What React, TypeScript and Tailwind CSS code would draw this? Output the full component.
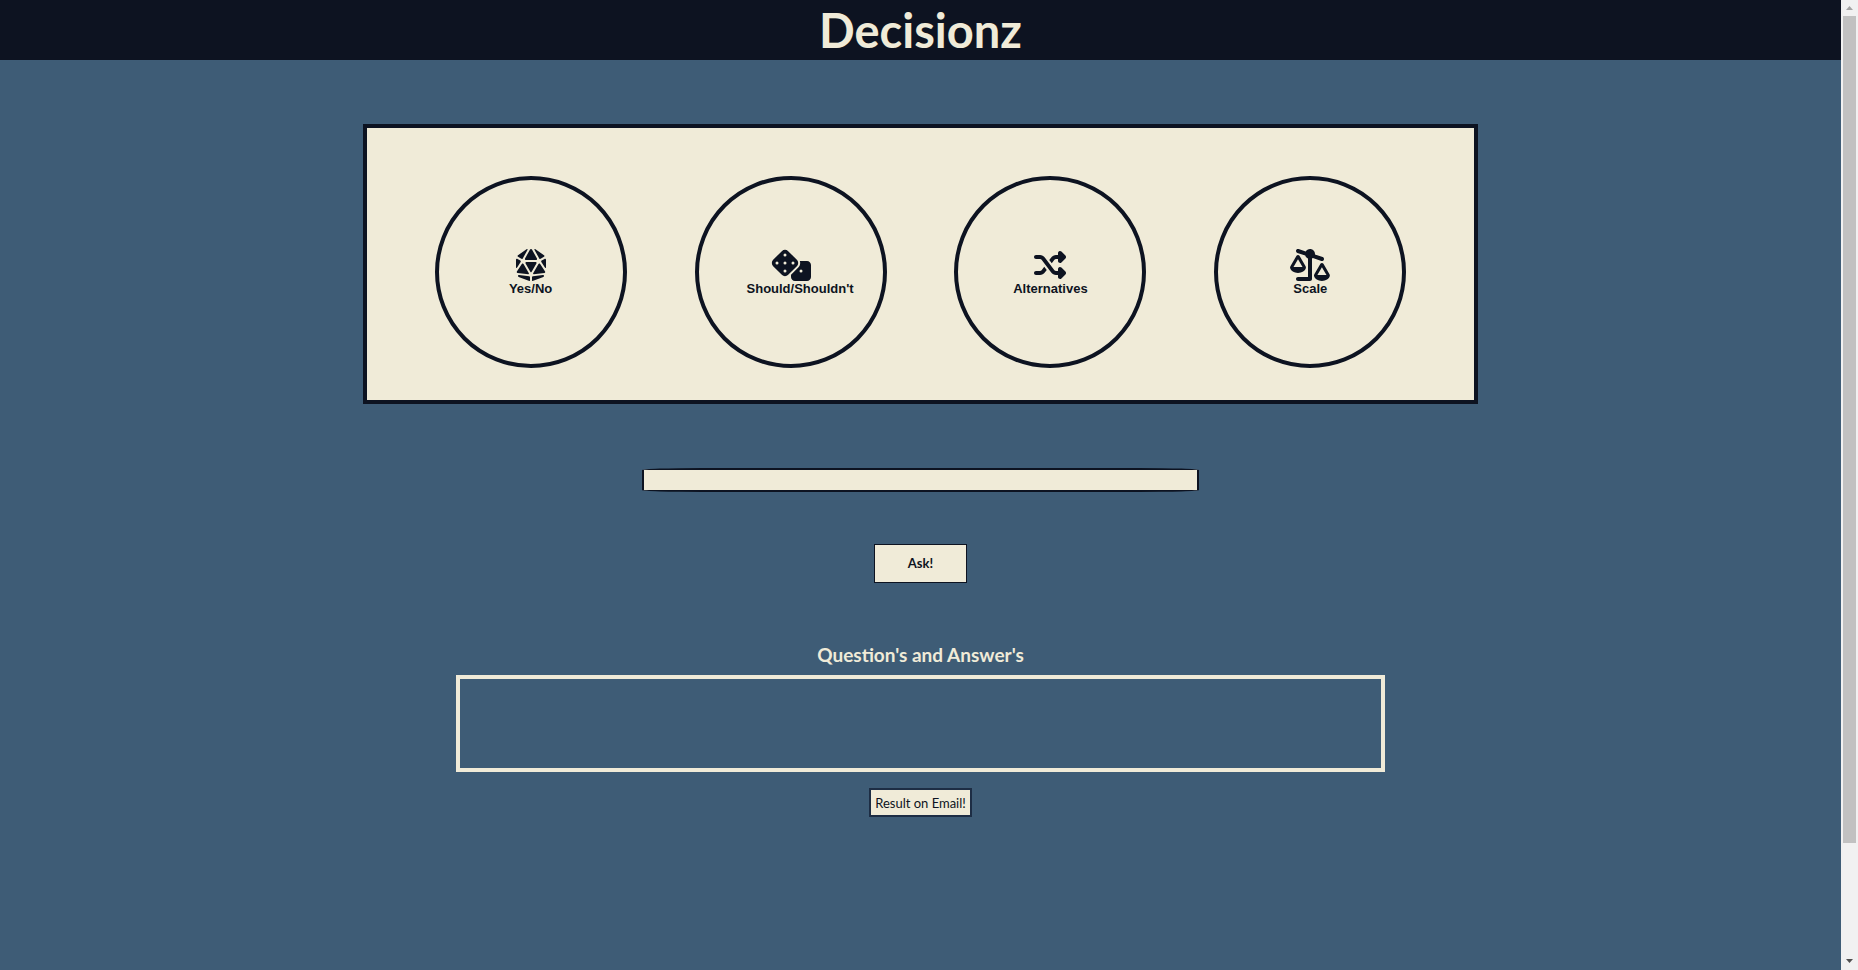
import { useState } from "react";
import type { FormEvent } from "react";
import type { IconType } from "react-icons";
import { FaDiceD20, FaDice, FaShuffle, FaScaleUnbalancedFlip } from "react-icons/fa6";

const modes: { label: string; Icon: IconType; width: string }[] = [
  { label: "Yes/No", Icon: FaDiceD20, width: "w-8" },
  { label: "Should/Shouldn't", Icon: FaDice, width: "w-10" },
  { label: "Alternatives", Icon: FaShuffle, width: "w-8" },
  { label: "Scale", Icon: FaScaleUnbalancedFlip, width: "w-10" },
];

function ModeButton({ label, Icon, width }: { label: string; Icon: IconType; width: string }) {
  return (
    <button
      type="button"
      className="size-48 shrink-0 rounded-full border-4 border-[#0d1321] px-12 pt-0.5 text-center font-['Liberation_Sans',sans-serif] text-[13px] leading-4 font-bold whitespace-nowrap text-[#0d1321]"
    >
      <Icon className={`mx-auto h-8 ${width}`} aria-hidden="true" />
      {label}
    </button>
  );
}

function ScrollTrack() {
  return (
    <div aria-hidden="true" className="sticky top-0 flex h-screen w-[17px] shrink-0 flex-col items-center bg-[#f1f1f1]">
      <svg className="h-4 w-[17px] shrink-0" viewBox="0 0 17 16" fill="#a3a3a3">
        <path d="M5 10h7L8.500 6z" />
      </svg>
      <div className="h-[85.300%] w-[13px] bg-[#c1c1c1]" />
      <svg className="mt-auto h-4 w-[17px] shrink-0" viewBox="0 0 17 16" fill="#505050">
        <path d="M5 5h7L8.500 9z" />
      </svg>
    </div>
  );
}

export default function App() {
  const [question, setQuestion] = useState("");
  const submit = (e: FormEvent) => e.preventDefault();

  return (
    <div className="flex min-h-screen bg-[#3e5c76] font-['Lato',sans-serif] text-[#0d1321]">
      <div className="flex min-w-0 flex-1 flex-col items-center">
        <header className="flex h-15 w-full justify-center bg-[#0d1321]">
          <h1 className="text-[47px] leading-15 font-bold text-[#f0ebd8]">Decisionz</h1>
        </header>

        <main className="flex w-full flex-col items-center pt-16">
          <section
            aria-label="Decision type"
            className="flex w-[60.6%] flex-wrap justify-evenly border-4 border-[#0d1321] bg-[#f0ebd8] pt-12 pb-8"
          >
            {modes.map((mode) => (
              <ModeButton key={mode.label} {...mode} />
            ))}
          </section>

          <form onSubmit={submit} className="mt-16 flex w-full flex-col items-center">
            <input
              type="text"
              aria-label="Your question"
              value={question}
              onChange={(e) => setQuestion(e.target.value)}
              className="h-6 w-[30.3%] rounded-[60px/2px] border-2 border-[#0d1321] bg-[#f0ebd8] px-2 text-sm outline-none"
            />
            <button
              type="submit"
              className="mt-13 h-[39px] w-[93px] border border-[#0d1321] bg-[#f0ebd8] text-[13px] font-bold"
            >
              Ask!
            </button>
          </form>

          <h2 className="mt-15 text-[19px] leading-6 font-bold text-[#f0ebd8]">Question's and Answer's</h2>
          <section aria-label="Answers" className="mt-2 h-[97px] w-[50.5%] border-4 border-[#f0ebd8]" />
          <button
            type="button"
            className="mt-4 h-[29px] border-2 border-[#1d2d44] bg-[#f0ebd8] px-1 text-[13px] leading-6 text-[#0d1321]"
          >
            Result on Email!
          </button>
        </main>
      </div>
      <ScrollTrack />
    </div>
  );
}
